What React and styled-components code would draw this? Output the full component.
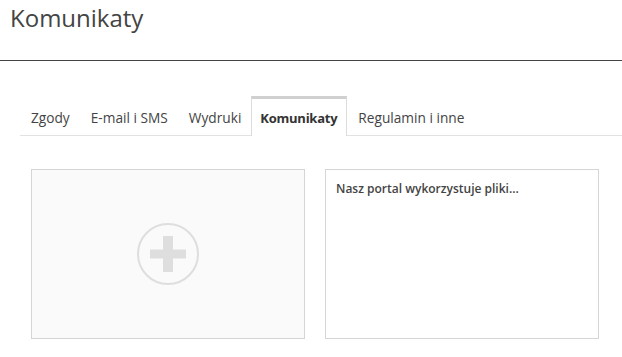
import React from 'react'
import styled, { createGlobalStyle } from 'styled-components'

const GlobalStyle = createGlobalStyle`
  html, body {
    margin: 0;
    padding: 0;
    background: #fff;
  }
  body {
    font-family: "Open Sans", "Liberation Sans", sans-serif;
    color: #444;
  }
`

const tabs = ['Zgody', 'E-mail i SMS', 'Wydruki', 'Komunikaty', 'Regulamin i inne']

const App = () => {
  const active = 'Komunikaty'
  return (
    <Page>
      <GlobalStyle />
      <Header>
        <Title>Komunikaty</Title>
      </Header>
      <Body>
        <TabBar>
          {tabs.map((t) => (
            <Tab key={t} $active={t === active}>
              {t}
            </Tab>
          ))}
        </TabBar>
        <Cards>
          <Card $empty>
            <svg width="64" height="64" viewBox="0 0 64 64">
              <circle cx="32" cy="32" r="30" fill="none" stroke="#dedede" strokeWidth="2" />
              <rect x="14" y="27.5" width="36" height="9" fill="#dedede" />
              <rect x="27" y="14" width="10" height="36" fill="#dedede" />
            </svg>
          </Card>
          <Card>
            <CardText>Nasz portal wykorzystuje pliki...</CardText>
          </Card>
        </Cards>
      </Body>
    </Page>
  )
}

const Page = styled.main`
  width: 622px;
  min-height: 357px;
`

const Header = styled.header`
  padding: 1px 0 0 10px;
  height: 59px;
  border-bottom: 1px solid #444;
`

const Title = styled.h1`
  margin: 0;
  font-family: "Open Sans", sans-serif;
  font-weight: 400;
  font-size: 24px;
  line-height: 34px;
  color: #444;
`

const Body = styled.section`
  padding: 35px 0 0 20px;
`

const TabBar = styled.nav`
  display: flex;
  align-items: flex-end;
  height: 39px;
  border-bottom: 1px solid #e2e2e2;
`

const Tab = styled.div`
  box-sizing: border-box;
  height: ${(p) => (p.$active ? '40px' : '38px')};
  margin-bottom: ${(p) => (p.$active ? '-1px' : '0')};
  padding: ${(p) => (p.$active ? '0 9px 0 8px' : '2px 10px 0 11px')};
  display: flex;
  align-items: center;
  font-size: ${(p) => (p.$active ? '13px' : '13.7px')};
  font-weight: ${(p) => (p.$active ? 700 : 400)};
  letter-spacing: ${(p) => (p.$active ? '-0.25px' : '0')};
  color: ${(p) => (p.$active ? '#333' : '#444')};
  background: #fff;
  border: ${(p) => (p.$active ? '1px solid #dcdcdc' : 'none')};
  border-top: ${(p) => (p.$active ? '3px solid #d0d0d0' : 'none')};
  border-bottom: none;
  white-space: nowrap;
`

const Cards = styled.div`
  display: grid;
  grid-template-columns: 274px 274px;
  gap: 20px;
  padding: 33px 0 0 11px;
`

const Card = styled.div`
  box-sizing: border-box;
  height: 170px;
  border: 1px solid #d5d5d5;
  background: ${(p) => (p.$empty ? '#fafafa' : '#fff')};
  display: flex;
  align-items: ${(p) => (p.$empty ? 'center' : 'flex-start')};
  justify-content: ${(p) => (p.$empty ? 'center' : 'flex-start')};
  padding: ${(p) => (p.$empty ? '0' : '11px 10px')};
`

const CardText = styled.p`
  margin: 0;
  font-size: 12px;
  font-weight: 600;
  line-height: 16px;
  color: #444;
`

export default App
